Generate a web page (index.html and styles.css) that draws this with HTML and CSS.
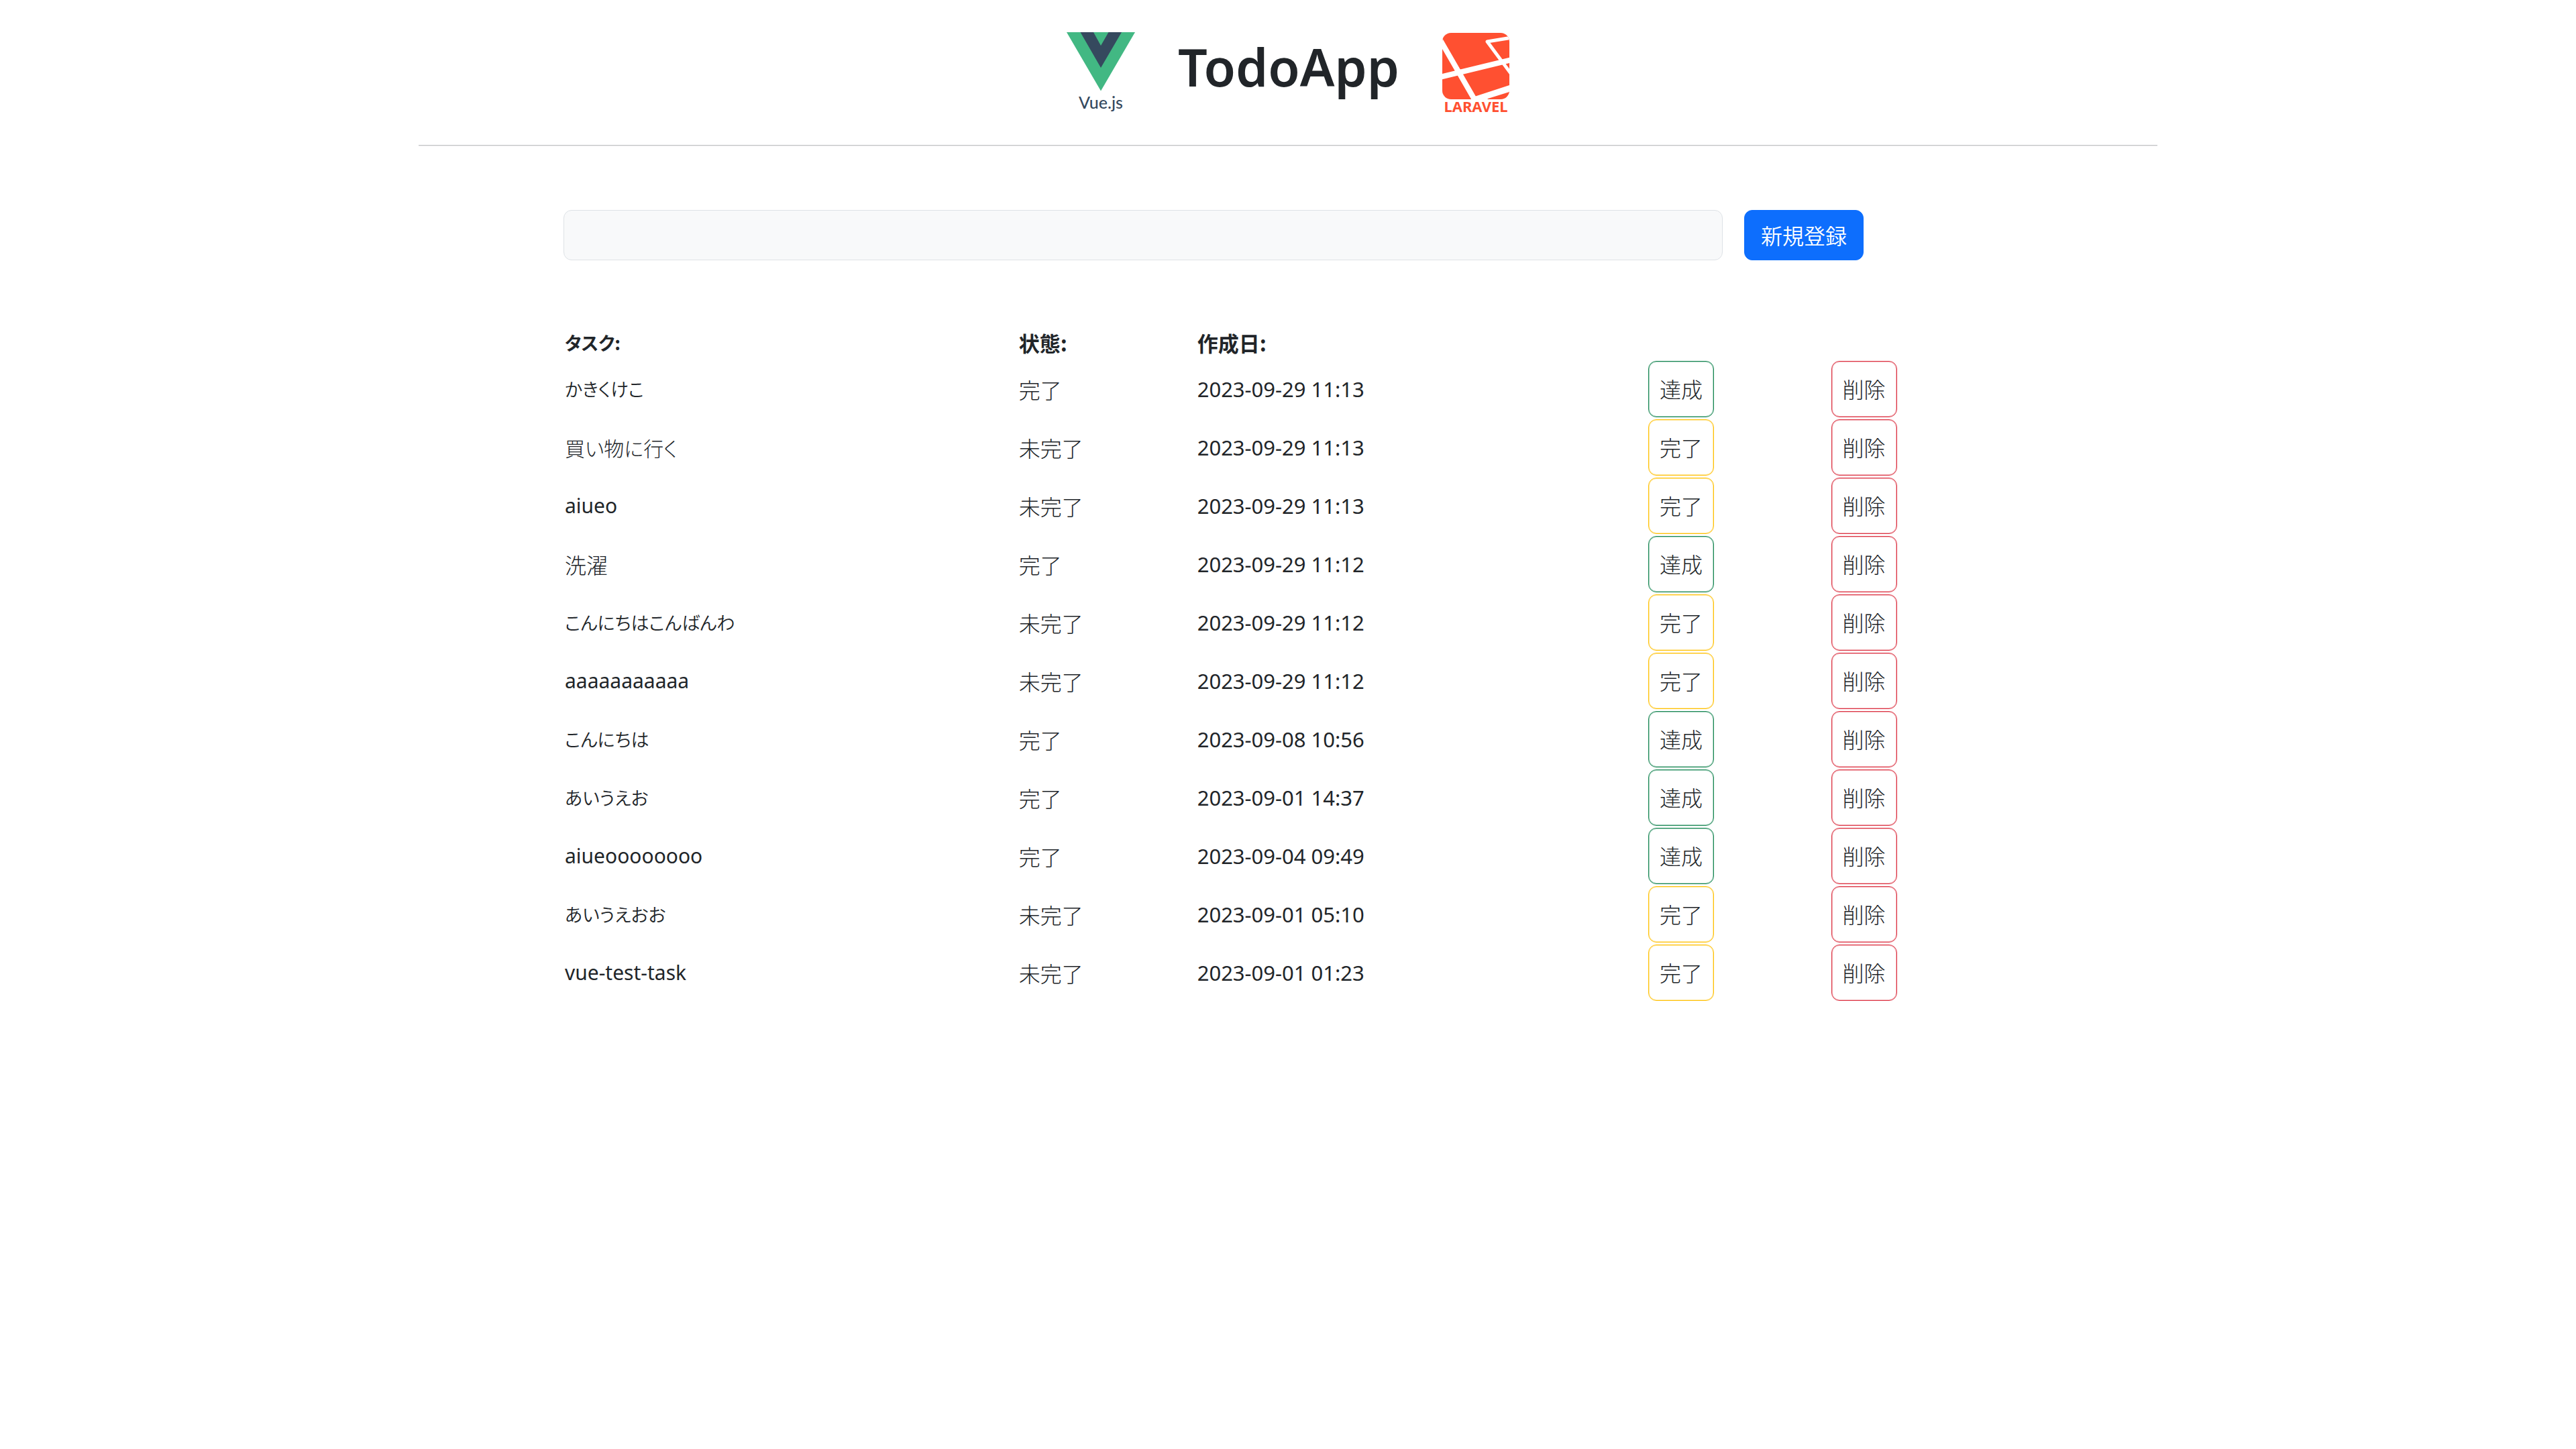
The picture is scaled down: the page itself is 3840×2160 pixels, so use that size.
FILE: index.html
```html
<!DOCTYPE html>
<html lang="ja">
<head>
<meta charset="utf-8">
<meta name="viewport" content="width=device-width, initial-scale=1">
<title>TodoApp</title>
<link rel="stylesheet" href="styles.css">
</head>
<body>
<div class="container">
  <header class="app-header">
    <svg class="logo" viewBox="0 0 102 128" role="img" aria-label="Vue.js">
      <path fill="#42b883" d="M0 0H102L51 87.500Z"/>
      <path fill="#35495e" d="M20.500 0H40L51 20L62.500 0H82L51 53Z"/>
      <text class="logo-vue-text" x="51" y="114" text-anchor="middle">Vue.js</text>
    </svg>
    <h1 class="app-title">TodoApp</h1>
    <svg class="logo" viewBox="0 0 100 128" role="img" aria-label="Laravel">
      <defs><clipPath id="tile"><rect x="0" y="1" width="100" height="99" rx="13"/></clipPath></defs>
      <g clip-path="url(#tile)">
        <rect x="0" y="1" width="100" height="99" fill="#ff5031"/>
        <path fill="none" stroke="#fff" stroke-width="8" d="M-4 10L49 102M-4 67L104 41"/>
        <path fill="none" stroke="#fff" stroke-width="5" stroke-linejoin="round" d="M104 8L67 14L104 64"/>
        <path fill="#fff" d="M48 96L100 79V89L68 99L66 102H46Z"/>
      </g>
      <text class="logo-laravel-text" x="50" y="119" text-anchor="middle">LARAVEL</text>
    </svg>
  </header>
  <hr class="divider">
  <main class="content">
    <form class="task-form">
      <input class="task-input" type="text" aria-label="タスク">
      <button class="btn-primary" type="button">新規登録</button>
    </form>
    <table class="task-table">
      <colgroup><col class="col-task"><col class="col-status"><col class="col-date"><col class="col-action"><col class="col-action"></colgroup>
      <thead>
        <tr><th scope="col" class="kana">タスク:</th><th scope="col">状態:</th><th scope="col">作成日:</th><td></td><td></td></tr>
      </thead>
      <tbody>
        <tr><td class="kana">かきくけこ</td><td>完了</td><td class="date">2023-09-29 11:13</td><td><button type="button" class="btn btn-success">達成</button></td><td><button type="button" class="btn btn-danger">削除</button></td></tr>
        <tr><td class="mixed">買い物に行く</td><td>未完了</td><td class="date">2023-09-29 11:13</td><td><button type="button" class="btn btn-warning">完了</button></td><td><button type="button" class="btn btn-danger">削除</button></td></tr>
        <tr><td class="latin">aiueo</td><td>未完了</td><td class="date">2023-09-29 11:13</td><td><button type="button" class="btn btn-warning">完了</button></td><td><button type="button" class="btn btn-danger">削除</button></td></tr>
        <tr><td>洗濯</td><td>完了</td><td class="date">2023-09-29 11:12</td><td><button type="button" class="btn btn-success">達成</button></td><td><button type="button" class="btn btn-danger">削除</button></td></tr>
        <tr><td class="kana">こんにちはこんばんわ</td><td>未完了</td><td class="date">2023-09-29 11:12</td><td><button type="button" class="btn btn-warning">完了</button></td><td><button type="button" class="btn btn-danger">削除</button></td></tr>
        <tr><td class="latin">aaaaaaaaaaa</td><td>未完了</td><td class="date">2023-09-29 11:12</td><td><button type="button" class="btn btn-warning">完了</button></td><td><button type="button" class="btn btn-danger">削除</button></td></tr>
        <tr><td class="kana">こんにちは</td><td>完了</td><td class="date">2023-09-08 10:56</td><td><button type="button" class="btn btn-success">達成</button></td><td><button type="button" class="btn btn-danger">削除</button></td></tr>
        <tr><td class="kana">あいうえお</td><td>完了</td><td class="date">2023-09-01 14:37</td><td><button type="button" class="btn btn-success">達成</button></td><td><button type="button" class="btn btn-danger">削除</button></td></tr>
        <tr><td class="latin">aiueoooooooo</td><td>完了</td><td class="date">2023-09-04 09:49</td><td><button type="button" class="btn btn-success">達成</button></td><td><button type="button" class="btn btn-danger">削除</button></td></tr>
        <tr><td class="kana">あいうえおお</td><td>未完了</td><td class="date">2023-09-01 05:10</td><td><button type="button" class="btn btn-warning">完了</button></td><td><button type="button" class="btn btn-danger">削除</button></td></tr>
        <tr><td class="latin">vue-test-task</td><td>未完了</td><td class="date">2023-09-01 01:23</td><td><button type="button" class="btn btn-warning">完了</button></td><td><button type="button" class="btn btn-danger">削除</button></td></tr>
      </tbody>
    </table>
  </main>
</div>
</body>
</html>
```
FILE: styles.css
```css
*,
*::before,
*::after {
  box-sizing: border-box;
}

body {
  margin: 0;
  background: #fff;
  color: #212529;
  font-family: "Noto Sans CJK JP", "Noto Sans", sans-serif;
  font-size: 32px;
  font-weight: 300;
  line-height: 48px;
}

button,
input {
  font: inherit;
}

.container {
  max-width: 2640px;
  margin: 0 auto;
  padding: 0 24px;
}

.app-header {
  display: flex;
  justify-content: center;
  align-items: flex-start;
  gap: 64px;
  padding: 48px 0 40px;
}

.logo {
  flex: none;
  height: 128px;
}

.logo-vue-text {
  fill: #35495e;
  font-family: Lato, sans-serif;
  font-size: 25px;
  font-weight: 500;
}

.logo-laravel-text {
  fill: #ff5031;
  font-family: "Noto Sans", sans-serif;
  font-size: 22px;
  font-weight: 700;
}

.app-title {
  margin: 0;
  font-family: "Noto Sans", sans-serif;
  font-size: 77px;
  font-weight: 570;
  line-height: 104px;
}

.divider {
  margin: 0;
  border: 0;
  border-top: 1px solid #c3c4c5;
  border-bottom: 1px solid #e9e9ea;
  opacity: 1;
}

/* One twelfth of the container is left free on both sides. */
.content {
  width: 83.3333%;
  margin: 0 auto;
  padding-top: 95px;
}

.task-form {
  display: flex;
  gap: 32px;
  margin-bottom: 99px;
}

.task-input {
  width: 80%;
  height: 75px;
  padding: 12px 24px;
  border: 1px solid #dee2e6;
  border-radius: 12px;
  background: #f8f9fa;
  color: inherit;
}

.btn-primary {
  padding: 0 24px 2px;
  border: 1px solid #0d6efd;
  border-radius: 12px;
  background: #0d6efd;
  color: #fff;
  font-weight: 350;
}

.task-table {
  width: 100%;
  table-layout: fixed;
  border-collapse: collapse;
}

.col-task { width: 31.3%; }
.col-status { width: 12.3%; }
.col-date { width: 31.1%; }
.col-action { width: 12.6%; }

.task-table th,
.task-table td {
  padding: 0 2px 3px;
  text-align: left;
  vertical-align: middle;
}

.task-table th {
  height: 49px;
  font-size: 31px;
  font-weight: 700;
}

.task-table tbody td {
  height: 87px;
}

.task-table .kana {
  font-size: 27px;
  font-feature-settings: "palt";
}

.task-table td.kana {
  font-weight: 350;
}

.task-table .mixed {
  font-size: 30px;
  font-feature-settings: "palt";
}

.task-table .latin,
.task-table .date {
  font-family: "Noto Sans", sans-serif;
  font-weight: 400;
}

.task-table .latin {
  font-size: 30px;
}

.task-table .date {
  font-size: 31px;
}

.btn {
  display: block;
  height: 84px;
  padding: 0 16px 2px;
  border: 1px solid;
  border-radius: 12px;
  background: #fff;
  color: #212529;
}

.btn-success { border-color: #198754; box-shadow: inset 0 0 0 1px #19875460; }
.btn-warning { border-color: #ffc107; box-shadow: inset 0 0 0 1px #ffc10760; }
.btn-danger { border-color: #dc3545; box-shadow: inset 0 0 0 1px #dc354560; }
```
